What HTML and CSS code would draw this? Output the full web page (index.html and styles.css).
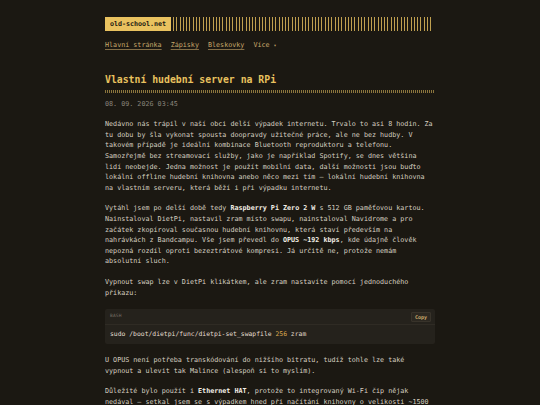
FILE: index.html
```html
<!DOCTYPE html>
<html lang="cs">
<head>
<meta charset="utf-8">
<title>Vlastní hudební server na RPi</title>
<link rel="stylesheet" href="styles.css">
</head>
<body>
<div class="page">
  <header class="site-header">
    <div class="brand-row">
      <a class="logo" href="#">old-school.net</a>
      <div class="stripes"></div>
    </div>
    <nav class="nav">
      <a href="#">Hlavní stránka</a>
      <a href="#">Zápisky</a>
      <a href="#">Bleskovky</a>
      <span class="more">Více <span class="caret">▾</span></span>
    </nav>
  </header>

  <article class="post">
    <h1 class="title">Vlastní hudební server na RPi</h1>
    <div class="title-rule"></div>
    <div class="date">08. 09. 2026 03:45</div>

    <p>Nedávno nás trápil v naší obci delší výpadek internetu. Trvalo to asi 8 hodin. Za tu dobu by šla vykonat spousta doopravdy užitečné práce, ale ne bez hudby. V takovém případě je ideální kombinace Bluetooth reproduktoru a telefonu. Samozřejmě bez streamovací služby, jako je například Spotify, se dnes většina lidí neobejde. Jedna možnost je použít mobilní data, další možnosti jsou buďto lokální offline hudební knihovna anebo něco mezi tím – lokální hudební knihovna na vlastním serveru, která běží i při výpadku internetu.</p>

    <p>Vytáhl jsem po delší době tedy <strong>Raspberry Pi Zero 2 W</strong> s 512 GB paměťovou kartou. Nainstaloval DietPi, nastavil zram místo swapu, nainstaloval Navidrome a pro začátek zkopíroval současnou hudební knihovnu, která staví především na nahrávkách z Bandcampu. Vše jsem převedl do <strong>OPUS ~192 kbps</strong>, kde údajně člověk nepozná rozdíl oproti bezeztrátové kompresi. Já určitě ne, protože nemám absolutní sluch.</p>

    <p>Vypnout swap lze v DietPi klikátkem, ale zram nastavíte pomocí jednoduchého příkazu:</p>

    <div class="code-block">
      <div class="code-head">
        <span class="lang">BASH</span>
        <button class="copy">Copy</button>
      </div>
      <pre class="code"><code>sudo /boot/dietpi/func/dietpi-set_swapfile <span class="num">256</span> zram</code></pre>
    </div>

    <p>U OPUS není potřeba transkódování do nižšího bitratu, tudíž tohle lze také vypnout a ulevit tak Malince (alespoň si to myslím).</p>

    <p>Důležité bylo použít i <strong>Ethernet HAT</strong>, protože to integrovaný Wi-Fi čip nějak nedával – setkal jsem se s výpadkem hned při načítání knihovny o velikosti ~1500 skladeb. Po připojení kabelem vše běží bez problémů.</p>
  </article>
</div>
</body>
</html>
```

FILE: styles.css
```css
html, body {
  margin: 0;
  padding: 0;
  background: #1b1812;
}

body {
  font-family: "DejaVu Sans Mono", "Liberation Mono", monospace;
  font-size: 6.73px;
  line-height: 10.6px;
  color: #d6cfc1;
}

.page {
  width: 330px;
  margin: 0 auto;
  padding-top: 17px;
}

.brand-row {
  display: flex;
  align-items: stretch;
  height: 14px;
}

.logo {
  display: flex;
  align-items: center;
  padding: 0 5px;
  background: #e9c25f;
  color: #1b1812;
  font-weight: bold;
  text-decoration: none;
  font-size: 6.67px;
}

.stripes {
  flex: 1;
  margin-left: 2px;
  margin-right: 2px;
  background: repeating-linear-gradient(90deg,
    rgba(233, 194, 95, 0.8) 0px,
    rgba(233, 194, 95, 0.8) 1px,
    transparent 1px,
    transparent 3.3px);
}

.nav {
  display: flex;
  gap: 9px;
  margin-top: 9px;
  color: #c9a96b;
}

.nav a {
  color: #c9a96b;
  text-decoration: underline;
  text-decoration-color: rgba(201, 169, 107, 0.6);
  text-underline-offset: 1.5px;
}

.more {
  color: #c9a96b;
}

.caret {
  font-size: 5px;
}

.post {
  margin-top: 22px;
}

.title {
  margin: 0;
  font-size: 9.8px;
  line-height: 14px;
  font-weight: bold;
  color: #e9c25f;
}

.title-rule {
  height: 3px;
  margin-top: 3px;
  background: repeating-linear-gradient(90deg,
    rgba(233, 194, 95, 0.55) 0px,
    rgba(233, 194, 95, 0.55) 1px,
    transparent 1px,
    transparent 2px);
}

.date {
  margin-top: 6px;
  color: #8a857c;
}

.post p {
  margin: 10px 0 0;
}

.post strong {
  color: #f3efe6;
}

.code-block {
  margin: 11px 0 11px;
  background: #25221c;
  border-radius: 2px;
}

.code-head {
  display: flex;
  justify-content: space-between;
  align-items: center;
  height: 15px;
  padding: 0 4px 0 5px;
  border-bottom: 1px solid #2f2b24;
}

.lang {
  font-size: 4.5px;
  color: #766f64;
  letter-spacing: 0.2px;
}

.copy {
  font-family: inherit;
  font-size: 5px;
  font-weight: bold;
  line-height: 6px;
  padding: 1px 3px;
  color: #c9a96b;
  background: #2c2821;
  border: 1px solid #38332a;
  border-radius: 1px;
}

.code {
  margin: 0;
  padding: 4px 5px 5px;
  font-family: inherit;
  font-size: 6.4px;
  line-height: 10px;
  color: #e4ddd0;
}

.num {
  color: #d9a84e;
}

.code-block + p {
  margin-top: 0;
}
```
